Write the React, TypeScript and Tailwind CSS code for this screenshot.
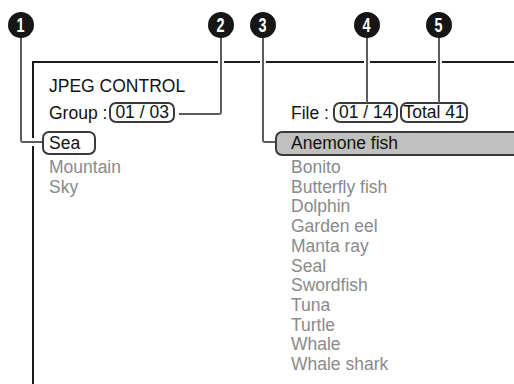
import React from "react";

const font = { fontFamily: '"Liberation Sans", Arial, sans-serif' };

function Callout({ n, left }: { n: string; left: string }) {
  return (
    <div
      className={`absolute top-[12px] ${left} w-[26px] h-[26px] rounded-full bg-[#161616] flex items-center justify-center`}
    >
      <span className="text-white font-bold text-[20px] leading-none scale-x-[0.72] inline-block">{n}</span>
    </div>
  );
}

export default function App() {
  const left = ["Mountain", "Sky"];
  const right = [
    "Bonito",
    "Butterfly fish",
    "Dolphin",
    "Garden eel",
    "Manta ray",
    "Seal",
    "Swordfish",
    "Tuna",
    "Turtle",
    "Whale",
    "Whale shark",
  ];
  return (
    <div className="relative w-[514px] h-[384px] overflow-hidden bg-white text-[17.5px] text-[#111]" style={font}>
      {/* frame */}
      <div className="ml-[32px] mt-[61px] h-[323px] border-l-2 border-t-2 border-[#1c1c1c]">
        <div className="pl-[15px] pt-[13px] leading-[20px]">JPEG CONTROL</div>
        <div className="flex mt-[6px]">
          {/* left column */}
          <div className="w-[241px] shrink-0 flex flex-col">
            <div className="flex items-center h-[21px] pl-[15px]">
              <span className="leading-[20px]">Group :</span>
              <span className="ml-[2px] h-[21px] border-2 border-[#3a3a3a] rounded-[7px] px-[4px] leading-[17px]">
                01 / 03
              </span>
            </div>
            <div className="mt-[8px] ml-[8px] w-[54px] h-[24px] border-2 border-[#3a3a3a] rounded-[7px] pl-[5px] leading-[20px]">
              Sea
            </div>
            <div className="mt-[2px] pl-[15px] leading-[20px] text-[#8a8a8a]">
              {left.map((t) => (
                <div key={t}>{t}</div>
              ))}
            </div>
          </div>
          {/* right column */}
          <div className="flex-1 min-w-0 flex flex-col">
            <div className="flex items-center h-[21px] pl-[16px]">
              <span className="leading-[20px]">File :</span>
              <span className="ml-[4px] h-[21px] border-2 border-[#3a3a3a] rounded-[7px] px-[4px] leading-[17px]">
                01 / 14
              </span>
              <span className="ml-[2px] h-[21px] border-2 border-[#3a3a3a] rounded-[7px] px-[1px] leading-[17px]">
                Total 41
              </span>
            </div>
            <div className="mt-[8px] h-[25px] border-2 border-r-0 border-[#3a3a3a] rounded-l-[7px] bg-[#c0c0c0] pl-[14px] leading-[21px]">
              Anemone fish
            </div>
            <div className="mt-[2px] pl-[16px] leading-[19.7px] text-[#8a8a8a]">
              {right.map((t) => (
                <div key={t}>{t}</div>
              ))}
            </div>
          </div>
        </div>
      </div>

      {/* white gaps where leader lines cross the frame */}
      <div className="absolute left-[30px] top-[138px] w-[6px] h-[8px] bg-white" />
      <div className="absolute left-[218px] top-[59px] w-[6px] h-[6px] bg-white" />
      <div className="absolute left-[260px] top-[59px] w-[6px] h-[6px] bg-white" />
      <div className="absolute left-[364px] top-[59px] w-[6px] h-[6px] bg-white" />
      <div className="absolute left-[436px] top-[59px] w-[6px] h-[6px] bg-white" />

      {/* leader lines */}
      <div className="absolute left-[20px] top-[37px] w-[22px] h-[106px] border-l-2 border-b-2 border-[#5c5c5c] rounded-bl-[3px]" />
      <div className="absolute left-[179px] top-[37px] w-[43px] h-[78px] border-r-2 border-b-2 border-[#5c5c5c] rounded-br-[3px]" />
      <div className="absolute left-[262px] top-[37px] w-[13px] h-[106px] border-l-2 border-b-2 border-[#5c5c5c] rounded-bl-[3px]" />
      <div className="absolute left-[366px] top-[37px] w-[2px] h-[66px] bg-[#5c5c5c]" />
      <div className="absolute left-[438px] top-[37px] w-[2px] h-[66px] bg-[#5c5c5c]" />

      <Callout n="1" left="left-[8px]" />
      <Callout n="2" left="left-[208px]" />
      <Callout n="3" left="left-[250px]" />
      <Callout n="4" left="left-[354px]" />
      <Callout n="5" left="left-[426px]" />
    </div>
  );
}
